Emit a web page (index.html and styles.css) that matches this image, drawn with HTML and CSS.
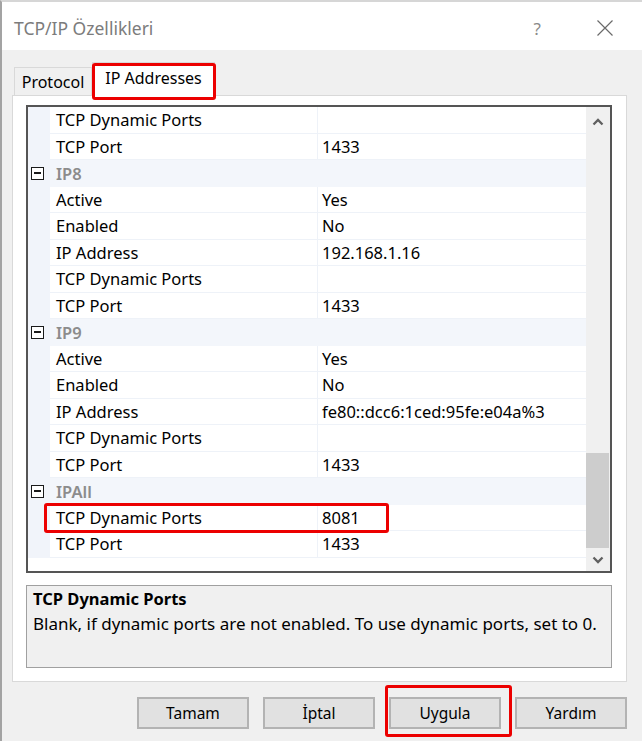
FILE: index.html
```html
<!DOCTYPE html>
<html lang="tr">
<head>
<meta charset="utf-8">
<title>TCP/IP Özellikleri</title>
<link rel="stylesheet" href="styles.css">
</head>
<body>
<div class="window">
  <header class="titlebar">
    <span class="title">TCP/IP Özellikleri</span>
    <span class="help">?</span>
    <svg class="close" width="16" height="16" viewBox="0 0 16 16" aria-hidden="true">
      <path d="M0.5 0.5 L15.5 15.5 M15.5 0.5 L0.5 15.5" stroke="#6a6a6a" stroke-width="1.2" fill="none"/>
    </svg>
  </header>

  <div class="tabs">
    <div class="tab">Protocol</div>
    <div class="tab active marked">IP Addresses</div>
  </div>

  <div class="panel">
    <div class="grid">
      <div class="rows">
        <div class="row"><span class="gutter"></span><span class="name">TCP Dynamic Ports</span><span class="value"></span></div>
        <div class="row"><span class="gutter"></span><span class="name">TCP Port</span><span class="value">1433</span></div>
        <div class="row cat"><span class="gutter"><i class="minus"></i></span><span class="cat-name">IP8</span></div>
        <div class="row"><span class="gutter"></span><span class="name">Active</span><span class="value">Yes</span></div>
        <div class="row"><span class="gutter"></span><span class="name">Enabled</span><span class="value">No</span></div>
        <div class="row"><span class="gutter"></span><span class="name">IP Address</span><span class="value">192.168.1.16</span></div>
        <div class="row"><span class="gutter"></span><span class="name">TCP Dynamic Ports</span><span class="value"></span></div>
        <div class="row"><span class="gutter"></span><span class="name">TCP Port</span><span class="value">1433</span></div>
        <div class="row cat"><span class="gutter"><i class="minus"></i></span><span class="cat-name">IP9</span></div>
        <div class="row"><span class="gutter"></span><span class="name">Active</span><span class="value">Yes</span></div>
        <div class="row"><span class="gutter"></span><span class="name">Enabled</span><span class="value">No</span></div>
        <div class="row"><span class="gutter"></span><span class="name">IP Address</span><span class="value">fe80::dcc6:1ced:95fe:e04a%3</span></div>
        <div class="row"><span class="gutter"></span><span class="name">TCP Dynamic Ports</span><span class="value"></span></div>
        <div class="row"><span class="gutter"></span><span class="name">TCP Port</span><span class="value">1433</span></div>
        <div class="row cat"><span class="gutter"><i class="minus"></i></span><span class="cat-name">IPAll</span></div>
        <div class="row row-marked"><span class="gutter"></span><span class="name">TCP Dynamic Ports</span><span class="value">8081</span></div>
        <div class="row"><span class="gutter"></span><span class="name">TCP Port</span><span class="value">1433</span></div>
      </div>
      <div class="scrollbar">
        <div class="arrow up">
          <svg width="12" height="8" viewBox="0 0 12 8" aria-hidden="true"><polyline points="1.5,6.5 6,2 10.5,6.5" fill="none" stroke="#606060" stroke-width="2.3"/></svg>
        </div>
        <div class="track"><div class="thumb"></div></div>
        <div class="arrow down">
          <svg width="12" height="8" viewBox="0 0 12 8" aria-hidden="true"><polyline points="1.5,1.5 6,6 10.5,1.5" fill="none" stroke="#606060" stroke-width="2.3"/></svg>
        </div>
      </div>
    </div>

    <div class="desc">
      <div class="desc-title">TCP Dynamic Ports</div>
      <div class="desc-text">Blank, if dynamic ports are not enabled. To use dynamic ports, set to 0.</div>
    </div>
  </div>

  <div class="buttons">
    <button class="btn">Tamam</button>
    <button class="btn">İptal</button>
    <button class="btn marked">Uygula</button>
    <button class="btn">Yardım</button>
  </div>
</div>
</body>
</html>
```

FILE: styles.css
```css
*, *::before, *::after { box-sizing: border-box; }

html, body { margin: 0; padding: 0; }

body {
  width: 642px;
  height: 741px;
  overflow: hidden;
  background: #f0f0f0;
  font-family: "Noto Sans", "Open Sans", sans-serif;
  font-size: 15px;
  color: #000;
}

.window {
  height: 741px;
  border-left: 2px solid #a3a3a3;
  border-top: 2px solid #d6d6d6;
  background: #f0f0f0;
}

/* title bar */
.titlebar {
  height: 48px;
  background: #fff;
  display: flex;
  align-items: center;
  padding: 4px 0 0 12px;
}
.title { flex: 1; font-size: 17.5px; color: #7c7c7c; }
.help { font-size: 17px; color: #8a8a8a; margin-right: 56px; }
.close { margin-right: 29px; display: block; }

/* tabs */
.tabs {
  height: 45px;
  display: flex;
  align-items: flex-end;
  padding-left: 12px;
  font-size: 16px;
}
.tab {
  height: 28px;
  width: 78px;
  border: 1px solid #d9d9d9;
  border-bottom: none;
  background: #f0f0f0;
  display: flex;
  align-items: center;
  justify-content: center;
  line-height: 1;
}
.tab.active {
  position: relative;
  z-index: 1;
  height: 34px;
  width: 123px;
  margin-bottom: -1px;
  background: #fff;
  padding-bottom: 3px;
}

/* red annotation frames */
.marked { position: relative; }
.marked::after {
  content: "";
  position: absolute;
  border: 3px solid #ec0000;
  border-radius: 3px;
  pointer-events: none;
}
.tab.marked::after { left: -1px; top: 0; width: 124px; height: 37px; }
.btn.marked::after { left: -6px; top: -14px; width: 127px; height: 52px; }

/* tab page */
.panel {
  margin-left: 10px;
  width: 615px;
  height: 587px;
  border: 1px solid #d9d9d9;
  background: #fff;
  padding: 9px 14px 13px 13px;
}

/* property grid */
.grid {
  height: 468px;
  border: 2px solid #555;
  display: flex;
  background: #fff;
  font-size: 16.5px;
}
.rows { flex: 1; overflow: hidden; }
.row {
  height: 26.5px;
  display: flex;
  position: relative;
}
.gutter {
  width: 22px;
  flex: none;
  background: #f1f4fa;
  display: flex;
  align-items: center;
  justify-content: center;
  padding-right: 4px;
}
.name, .value {
  border-bottom: 1px solid #eef2f8;
  display: flex;
  align-items: center;
  white-space: nowrap;
}
.name {
  width: 268px;
  flex: none;
  padding-left: 6px;
  border-right: 1px solid #eef2f8;
}
.value { flex: 1; padding-left: 4px; }

.row.cat { background: #f3f6fb; }
.cat-name {
  display: flex;
  align-items: center;
  padding-left: 6px;
  color: #8c8c8c;
  font-weight: 600;
}
.minus {
  width: 13px;
  height: 13px;
  border: 1.5px solid #1a1a1a;
  background: #fff;
  position: relative;
}
.minus::before {
  content: "";
  position: absolute;
  left: 2px;
  right: 2px;
  top: 4.25px;
  height: 1.5px;
  background: #1a1a1a;
}

.row-marked { z-index: 2; }
.row-marked::after {
  content: "";
  position: absolute;
  left: 16px;
  top: -2px;
  width: 345px;
  height: 30px;
  border: 3px solid #ec0000;
  border-radius: 3px;
}

/* scrollbar */
.scrollbar {
  width: 24px;
  flex: none;
  background: #f0f0f0;
  display: flex;
  flex-direction: column;
}
.arrow {
  display: flex;
  align-items: center;
  justify-content: center;
}
.arrow.up { height: 29px; }
.arrow.down { height: 23px; }
.track {
  flex: 1;
  display: flex;
  flex-direction: column;
  justify-content: flex-end;
}
.thumb {
  height: 95px;
  margin: 0 1px 0 0;
  background: #cdcdcd;
}

/* description area */
.desc {
  margin-top: 12px;
  height: 83px;
  border: 1px solid #a0a0a0;
  background: #f0f0f0;
  padding: 0 6px;
  line-height: 25px;
  font-size: 17px;
}
.desc-title { font-weight: 700; font-size: 16.5px; }

/* dialog buttons */
.buttons {
  margin-top: 15px;
  display: flex;
  gap: 14px;
  padding-left: 135px;
}
.btn {
  width: 112px;
  height: 32px;
  border: 2px solid #b3b3b3;
  background: #e1e1e1;
  font: inherit;
  font-size: 15.5px;
  color: #000;
  padding: 0;
}
```
